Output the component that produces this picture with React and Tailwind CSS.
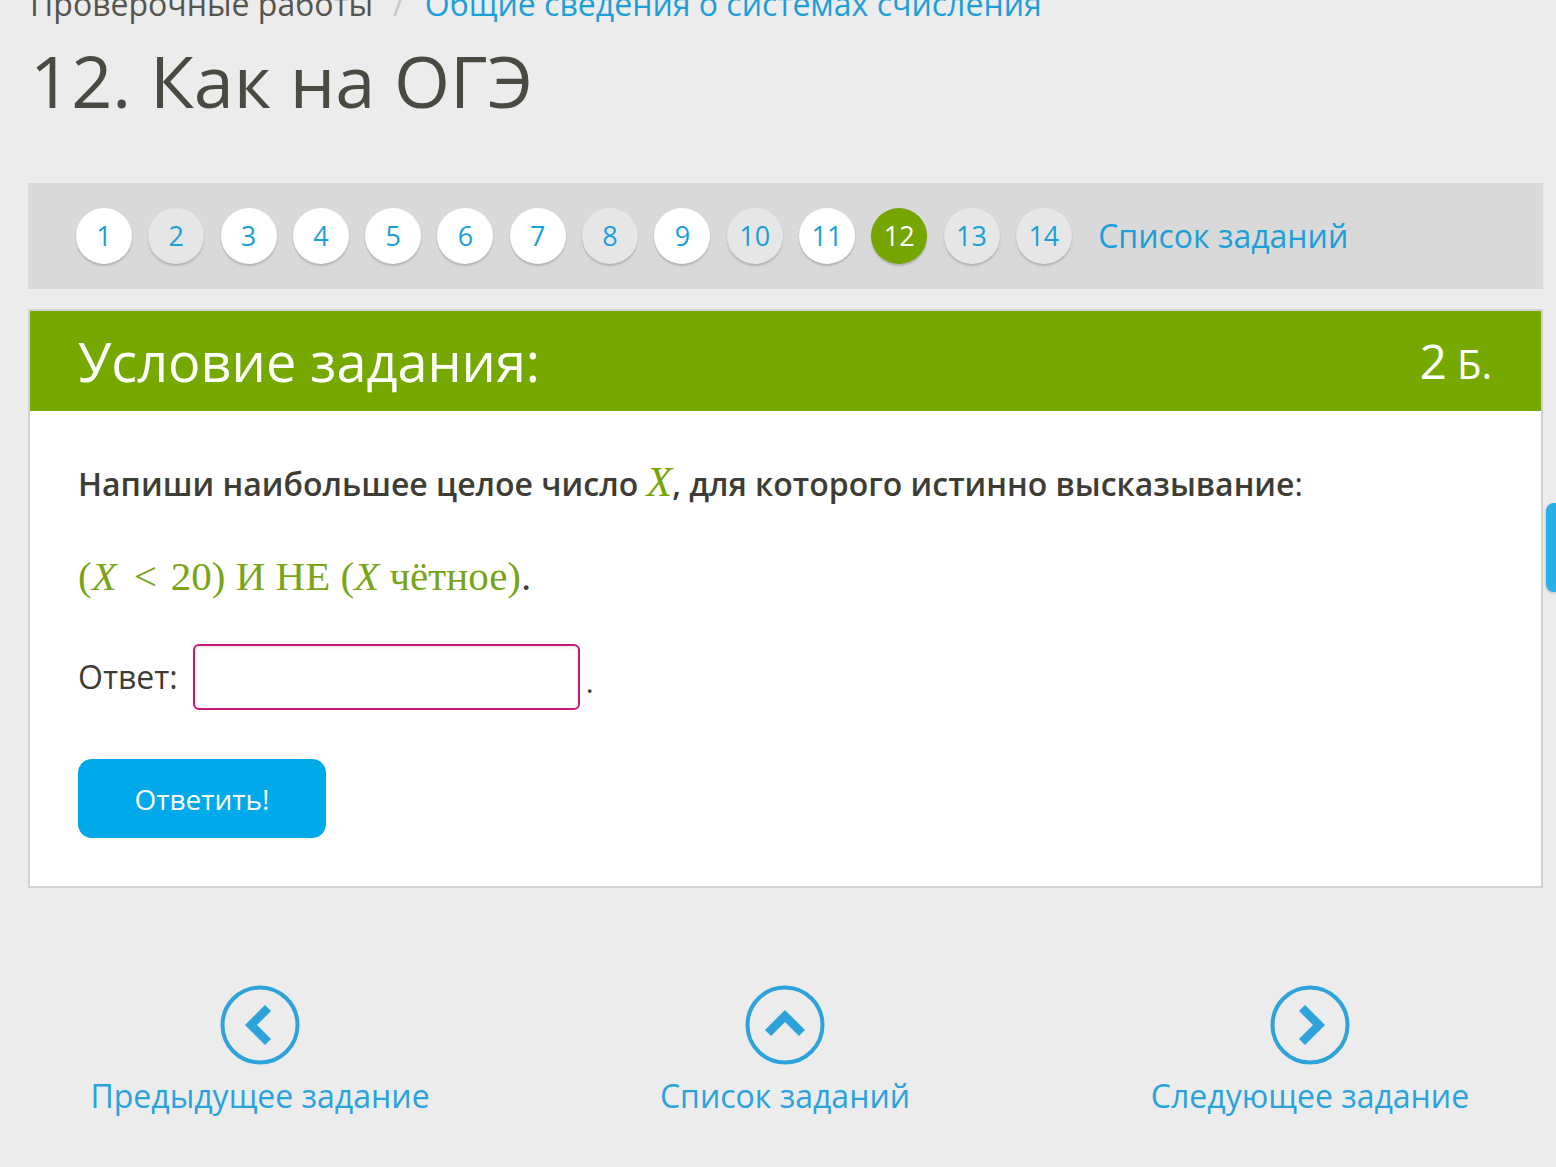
import React from 'react';

const TASKS = [
  { n: 1, state: 'done' },
  { n: 2, state: 'seen' },
  { n: 3, state: 'done' },
  { n: 4, state: 'done' },
  { n: 5, state: 'done' },
  { n: 6, state: 'done' },
  { n: 7, state: 'done' },
  { n: 8, state: 'seen' },
  { n: 9, state: 'done' },
  { n: 10, state: 'seen' },
  { n: 11, state: 'done' },
  { n: 12, state: 'current' },
  { n: 13, state: 'seen' },
  { n: 14, state: 'seen' },
];

const font = { fontFamily: '"Open Sans", "Noto Sans", sans-serif' };
const serif = { fontFamily: '"Liberation Serif", "DejaVu Serif", serif' };

function TaskCircle({ n, state }) {
  const base =
    'w-[56px] h-[56px] shrink-0 rounded-full flex items-center justify-center text-[27px] shadow-[0_2px_2px_rgba(0,0,0,0.18)]';
  if (state === 'current') {
    return <div className={`${base} bg-[#74a500] text-white`}>{n}</div>;
  }
  if (state === 'seen') {
    return <div className={`${base} bg-[#e6e6e6] text-[#1c9fd8]`}>{n}</div>;
  }
  return <div className={`${base} bg-white text-[#1c9fd8]`}>{n}</div>;
}

function CircleArrow({ dir }) {
  const paths = {
    left: 'M48 23 L31 40 L48 57',
    up: 'M23 48 L40 31 L57 48',
    right: 'M32 23 L49 40 L32 57',
  };
  return (
    <svg width="80" height="80" viewBox="0 0 80 80">
      <circle cx="40" cy="40" r="37.5" fill="none" stroke="#2ea3db" strokeWidth="4" />
      <path d={paths[dir]} fill="none" stroke="#2ea3db" strokeWidth="8.5" strokeLinejoin="miter" />
    </svg>
  );
}

function BottomLink({ dir, label }) {
  return (
    <a href="#" className="w-[420px] flex flex-col items-center text-[#29a3dc] text-[32px]">
      <CircleArrow dir={dir} />
      <span className="mt-[7px] leading-[48px]">{label}</span>
    </a>
  );
}

export default function App() {
  return (
    <div className="relative min-h-[1167px] bg-[#ececec] overflow-hidden" style={font}>
      <div className="pl-[28px] pr-[13px]">
        {/* breadcrumbs */}
        <div className="mt-[-16px] pl-[2px] flex items-baseline text-[32px] leading-[40px]">
          <span className="text-[#555550]">Проверочные работы</span>
          <span className="mx-[20px] text-[#c8c8c8]">/</span>
          <a href="#" className="text-[#1c9fd8]">Общие сведения о системах счисления</a>
        </div>

        <h1 className="mt-[11px] pl-[2px] text-[72px] leading-[90px] text-[#4a4a42] font-normal">
          12. Как на ОГЭ
        </h1>

        {/* task nav */}
        <div className="mt-[58px] h-[106px] bg-[#d9d9d9] flex items-center pl-[48px] gap-[16.3px]">
          {TASKS.map((t) => (
            <TaskCircle key={t.n} n={t.n} state={t.state} />
          ))}
          <a href="#" className="ml-[10px] text-[32px] text-[#1c9fd8]">Список заданий</a>
        </div>

        {/* task card */}
        <div className="mt-[20px] border-2 border-[#d2d2d2] bg-white">
          <div className="h-[100px] bg-[#76a900] flex items-center justify-between pl-[48px] pr-[49px] text-white">
            <span className="text-[54px]">Условие задания:</span>
            <span className="flex items-baseline">
              <span className="text-[48px]">2</span>
              <span className="ml-[10px] text-[40px]">Б.</span>
            </span>
          </div>

          <div className="pl-[48px] pt-[48px] pb-[48px]">
            <p className="text-[32px] font-semibold text-[#3d3d35] leading-[46px]">
              Напиши наибольшее целое число{' '}
              <span className="italic font-normal text-[42px] text-[#76a300]" style={serif}>
                X
              </span>
              , для которого истинно высказывание<span className="font-normal">:</span>
            </p>

            <p className="mt-[45px] text-[41px] text-[#7aa418] leading-[48px]" style={serif}>
              (<span className="italic">X</span>
              <span className="ml-[17px] mr-[14px]">&lt;</span>20) И НЕ (<span className="italic">X</span> чётное)
              <span className="text-[#3d3d35]">.</span>
            </p>

            <div className="mt-[44px] flex items-center">
              <span className="text-[32px] text-[#3d3d35]">Ответ:</span>
              <input
                type="text"
                className="ml-[15px] w-[387px] h-[66px] border-2 border-[#c8187a] rounded-[6px] bg-white outline-none shadow-[inset_0_1px_3px_rgba(0,0,0,0.12)]"
              />
              <span className="ml-[6px] mt-[8px] text-[30px] text-[#3d3d35]">.</span>
            </div>

            <button className="mt-[49px] w-[248px] h-[79px] rounded-[14px] bg-[#00aaea] text-white text-[28px] block">
              Ответить!
            </button>
          </div>
        </div>
      </div>

      {/* bottom nav */}
      <div className="mt-[97px] flex pl-[50px] gap-[105px]">
        <BottomLink dir="left" label="Предыдущее задание" />
        <BottomLink dir="up" label="Список заданий" />
        <BottomLink dir="right" label="Следующее задание" />
      </div>

      {/* side tab */}
      <div className="absolute right-0 top-[503px] w-[10px] h-[89px] rounded-l-[8px] bg-[#29b0e6] shadow-[0_1px_3px_rgba(0,0,0,0.25)]" />
    </div>
  );
}
